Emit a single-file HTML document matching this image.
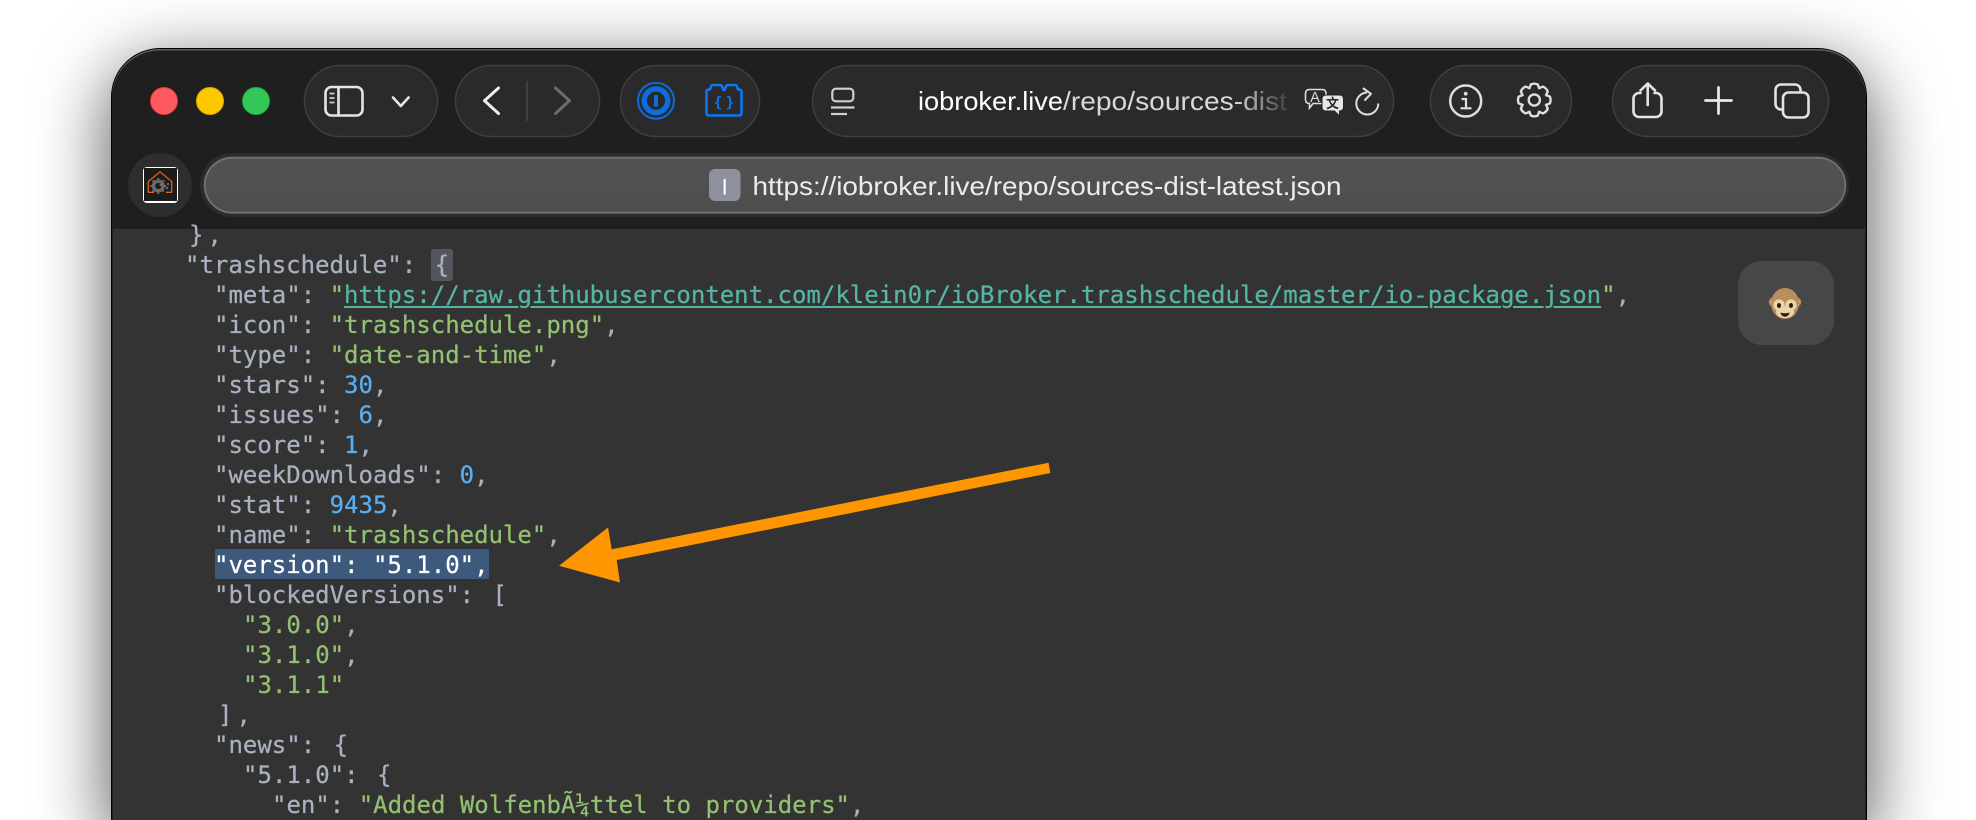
<!DOCTYPE html>
<html>
<head>
<meta charset="utf-8">
<style>
html,body{margin:0;padding:0;background:#fff;width:1976px;height:820px;overflow:hidden;}
#page{position:relative;width:1976px;height:820px;overflow:hidden;background:#fff;}
#win{position:absolute;left:112px;top:49px;width:1754px;height:771px;border-radius:48px 48px 0 0;background:#1f1f1f;box-shadow:0 0 0 1px #000,0 20px 70px 4px rgba(0,0,0,.65);}
#edge{position:absolute;left:112px;top:49px;width:1754px;height:60px;border-radius:48px 48px 0 0;box-shadow:inset 0 1.5px 0 #5e5e5e;}
#content{position:absolute;left:113px;top:229px;width:1752px;height:591px;background:#333;}
.l{position:absolute;height:30px;font:24px/30px "DejaVu Sans Mono","Liberation Mono",monospace;white-space:pre;color:#a9b1c1;-webkit-text-stroke:.25px currentColor;}
.s{color:#93c071;}
.n{color:#58aef0;}
.a{color:#55b5a5;text-decoration:underline;text-decoration-thickness:2px;text-underline-offset:3px;}
.b{padding:0 4px;}
.hl{background:#53565c;border-radius:3px;display:inline-block;height:32px;line-height:30px;vertical-align:top;margin-top:-1px;padding-top:1px;box-sizing:border-box;}
#sel{position:absolute;left:215px;top:549px;width:274px;height:30px;background:#3d5a7c;}
#code{position:absolute;left:-1px;top:1px;}
svg{position:absolute;left:0;top:0;}
</style>
</head>
<body>
<div id="page">
<div id="win"></div>
<div id="content"></div>
<div id="edge"></div>
<div id="sel"></div>
<div id="code">
<div class="l" style="left:186px;top:219px"><span class="b">}</span>,</div>
<div class="l" style="left:186px;top:249px">"trashschedule": <span class="b hl">{</span></div>
<div class="l" style="left:215px;top:279px">"meta": <span class="s">"</span><span class="a">https://raw.githubusercontent.com/klein0r/ioBroker.trashschedule/master/io-package.json</span><span class="s">"</span>,</div>
<div class="l" style="left:215px;top:309px">"icon": <span class="s">"trashschedule.png"</span>,</div>
<div class="l" style="left:215px;top:339px">"type": <span class="s">"date-and-time"</span>,</div>
<div class="l" style="left:215px;top:369px">"stars": <span class="n">30</span>,</div>
<div class="l" style="left:215px;top:399px">"issues": <span class="n">6</span>,</div>
<div class="l" style="left:215px;top:429px">"score": <span class="n">1</span>,</div>
<div class="l" style="left:215px;top:459px">"weekDownloads": <span class="n">0</span>,</div>
<div class="l" style="left:215px;top:489px">"stat": <span class="n">9435</span>,</div>
<div class="l" style="left:215px;top:519px">"name": <span class="s">"trashschedule"</span>,</div>
<div class="l" style="left:215px;top:549px;color:#fff">"version": "5.1.0",</div>
<div class="l" style="left:215px;top:579px">"blockedVersions": <span class="b">[</span></div>
<div class="l" style="left:244px;top:609px"><span class="s">"3.0.0"</span>,</div>
<div class="l" style="left:244px;top:639px"><span class="s">"3.1.0"</span>,</div>
<div class="l" style="left:244px;top:669px"><span class="s">"3.1.1"</span></div>
<div class="l" style="left:215px;top:699px"><span class="b">]</span>,</div>
<div class="l" style="left:215px;top:729px">"news": <span class="b">{</span></div>
<div class="l" style="left:244px;top:759px">"5.1.0": <span class="b">{</span></div>
<div class="l" style="left:273px;top:789px">"en": <span class="s">"Added Wolfenb&#xC3;&#xBC;ttel to providers"</span>,</div>
</div>

<svg width="1976" height="820" viewBox="0 0 1976 820" font-family="'Liberation Sans',sans-serif">
<defs>
<linearGradient id="fade" gradientUnits="userSpaceOnUse" x1="1235" y1="0" x2="1290" y2="0">
<stop offset="0" stop-color="#d8d8d8"/><stop offset="1" stop-color="#3a3a3a"/>
</linearGradient>
<linearGradient id="tab" x1="0" y1="0" x2="0" y2="1">
<stop offset="0" stop-color="#525252"/><stop offset="1" stop-color="#4e4e4e"/>
</linearGradient>
</defs>

<!-- traffic lights -->
<circle cx="164" cy="101" r="13.5" fill="#ff5a5f" stroke="#e0383e" stroke-width="1"/>
<circle cx="210" cy="101" r="13.5" fill="#fdc800" stroke="#dfa900" stroke-width="1"/>
<circle cx="256" cy="101" r="13.5" fill="#33c759" stroke="#1faa3f" stroke-width="1"/>

<!-- toolbar groups -->
<g fill="#2a2a2a" stroke="#3f3f3f" stroke-width="1.5">
<rect x="304.5" y="65.5" width="133" height="71" rx="35.5"/>
<rect x="455.5" y="65.5" width="144" height="71" rx="35.5"/>
<rect x="620.5" y="65.5" width="139" height="71" rx="35.5"/>
<rect x="812.5" y="65.5" width="581" height="71" rx="35.5"/>
<rect x="1430.5" y="65.5" width="141" height="71" rx="35.5"/>
<rect x="1612.5" y="65.5" width="216" height="71" rx="35.5"/>
</g>

<!-- sidebar icon -->
<g fill="none" stroke="#e6e6e6" stroke-width="2.6">
<rect x="325.5" y="87" width="37" height="28.5" rx="6"/>
<path d="M338.5 87V115.5"/>
<path d="M329.5 93.5h5M329.5 98h5M329.5 102.5h5" stroke-width="1.8" stroke="#cfcfcf"/>
</g>
<path d="M393 97.5l7.8 8.5 7.8-8.5" fill="none" stroke="#e6e6e6" stroke-width="2.6" stroke-linecap="round" stroke-linejoin="round"/>

<!-- back / forward -->
<path d="M498.5 88L484.5 100.7 498.5 113.5" fill="none" stroke="#efefef" stroke-width="3" stroke-linecap="round" stroke-linejoin="round"/>
<path d="M527 81V121" stroke="#454545" stroke-width="1.6"/>
<path d="M555.5 88L569.5 100.7 555.500 113.500" fill="none" stroke="#6c6c6c" stroke-width="3" stroke-linecap="round" stroke-linejoin="round"/>

<!-- 1Password -->
<circle cx="656" cy="100.7" r="18" fill="none" stroke="#0b6ee0" stroke-width="2"/>
<circle cx="656" cy="100.7" r="11.8" fill="none" stroke="#0b6ee0" stroke-width="5.4"/>
<rect x="654" y="94.7" width="4" height="12" rx="1.500" fill="#0b6ee0"/>

<!-- extension -->
<path d="M706.5 113V92q0-2.5 2.5-2.5h1l1-3q.5-1.500 2-1.500h7q1.500 0 2 1.500l1.500 3.500h1l1.500-3.500q.5-1.500 2-1.500h7q1.500 0 2 1.500l1 3h1q2.500 0 2.500 2.500V113q0 2.500-2.500 2.500H709q-2.500 0-2.500-2.500z" fill="none" stroke="#0a78f5" stroke-width="2.6" stroke-linejoin="round"/>
<text x="718" y="107" font-family="'DejaVu Sans Mono',monospace" font-weight="bold" font-size="14" fill="#0a78f5" text-anchor="middle">{</text>
<text x="730" y="107" font-family="'DejaVu Sans Mono',monospace" font-weight="bold" font-size="14" fill="#0a78f5" text-anchor="middle">}</text>

<!-- reader -->
<rect x="832.3" y="88.7" width="21" height="12.6" rx="3.6" fill="none" stroke="#cfcfcf" stroke-width="2.2"/>
<path d="M831 107.5h23.5" stroke="#cfcfcf" stroke-width="2.2"/>
<path d="M831 114h16" stroke="#cfcfcf" stroke-width="2.2"/>

<!-- address text -->
<text x="918" y="110" font-size="26" fill="#ffffff" textLength="145" lengthAdjust="spacingAndGlyphs">iobroker.live</text>
<text x="1063" y="110" font-size="26" fill="url(#fade)" textLength="224" lengthAdjust="spacingAndGlyphs">/repo/sources-dist</text>

<!-- translate -->
<path d="M1310 89.5h12q4 0 4 4v6q0 4-4 4h-9l-3.5 4.5v-4.5q-4 0-4-4v-6q0-4 4-4z" fill="none" stroke="#dcdcdc" stroke-width="1.6"/>
<text x="1315" y="102" font-size="14.5" fill="#dcdcdc" text-anchor="middle">A</text>
<path d="M1326 95h13.5q4 0 4 4v8q0 4-4 4v5l-5-5h-8.5q-4 0-4-4v-8q0-4 4-4z" fill="#e6e6e6" stroke="#262626" stroke-width="1"/>
<text x="1332.5" y="108" font-size="13" font-weight="bold" font-family="'Noto Sans CJK SC',sans-serif" fill="#2a2a2a" text-anchor="middle">文</text>

<!-- reload -->
<path d="M1367 92.5A11 11 0 1 0 1378.3 103.5" fill="none" stroke="#dcdcdc" stroke-width="2"/>
<path d="M1363.5 88.5L1371 93.8 1365 100" fill="none" stroke="#dcdcdc" stroke-width="2" stroke-linecap="round" stroke-linejoin="round"/>

<!-- info -->
<circle cx="1465.7" cy="101" r="15.5" fill="none" stroke="#dedede" stroke-width="2.5"/>
<circle cx="1465.7" cy="93.7" r="1.9" fill="#dedede"/>
<path d="M1461.5 99h4.5v9.2M1460.5 108.3h11" fill="none" stroke="#dedede" stroke-width="2.2"/>

<!-- gear -->
<g transform="translate(1534.3 100)" fill="none" stroke="#dedede" stroke-width="2.4" stroke-linejoin="round" stroke-linecap="round">
<circle r="5.6"/>
<path d="M-4.9-11.8L-3.4-15.6Q0-17 3.4-15.6L4.9-11.8"/>
<path transform="rotate(45)" d="M-4.9-11.8L-3.4-15.6Q0-17 3.4-15.6L4.9-11.8"/>
<path transform="rotate(90)" d="M-4.9-11.8L-3.4-15.6Q0-17 3.4-15.6L4.9-11.8"/>
<path transform="rotate(135)" d="M-4.9-11.8L-3.4-15.6Q0-17 3.4-15.6L4.9-11.8"/>
<path transform="rotate(180)" d="M-4.9-11.8L-3.4-15.6Q0-17 3.4-15.6L4.9-11.8"/>
<path transform="rotate(225)" d="M-4.9-11.8L-3.4-15.6Q0-17 3.4-15.6L4.9-11.8"/>
<path transform="rotate(270)" d="M-4.9-11.8L-3.4-15.6Q0-17 3.4-15.6L4.9-11.8"/>
<path transform="rotate(315)" d="M-4.9-11.8L-3.4-15.6Q0-17 3.4-15.6L4.9-11.8"/>
</g>

<!-- share -->
<g fill="none" stroke="#e4e4e4" stroke-width="2.6" stroke-linecap="round" stroke-linejoin="round">
<path d="M1640.5 93h-1.5a5.5 5.5 0 0 0-5.5 5.5V111.5a5.5 5.5 0 0 0 5.5 5.5h17a5.5 5.5 0 0 0 5.5-5.5V98.5a5.5 5.5 0 0 0-5.5-5.5h-1.5"/>
<path d="M1647.7 105V84"/>
<path d="M1640.5 90.5L1647.7 83.5 1655 90.5"/>
</g>

<!-- plus -->
<path d="M1718.5 87.5V113.5M1705.5 100.5H1731.5" stroke="#e8e8e8" stroke-width="2.8" stroke-linecap="round"/>

<!-- tabs -->
<g fill="none" stroke="#e2e2e2" stroke-width="2.6" stroke-linejoin="round">
<rect x="1783" y="92.5" width="25.5" height="25" rx="5.5"/>
<path d="M1783 109.5H1781a5.5 5.5 0 0 1-5.5-5.5V90a5.5 5.5 0 0 1 5.5-5.5H1795a5.5 5.5 0 0 1 5.5 5.5V92.5"/>
</g>

<!-- second row -->
<circle cx="160" cy="185" r="32" fill="#2e2e2e"/>
<rect x="143" y="167" width="35" height="36" rx="4" fill="#fff"/>
<rect x="144" y="168" width="33" height="33" fill="#1c1c1c"/>
<path d="M148.3 181.5L160 171.8 171.7 181.5V192.3H166M154 192.3H148.3V181.5" fill="none" stroke="#d9641c" stroke-width="1.3"/>
<circle cx="158.3" cy="186" r="4.8" fill="none" stroke="#6a6a6a" stroke-width="3.4"/>
<g stroke="#6a6a6a" stroke-width="2">
<path d="M158.3 178v2M158.3 192v2M150.3 186h2M164.3 186h2M152.6 180.3l1.4 1.4M162.6 190.3l1.4 1.4M152.6 191.7l1.4-1.4M162.6 181.7l1.4-1.4"/>
</g>
<circle cx="160.5" cy="185" r="1" fill="#d9641c"/>
<circle cx="168" cy="184" r="1" fill="#d9641c"/>
<circle cx="167" cy="188" r="1.2" fill="#6a6a6a"/>

<rect x="200" y="153" width="1649" height="64" rx="32" fill="#2c2c2c"/>
<rect x="204.7" y="157.7" width="1640.6" height="55" rx="27.5" fill="url(#tab)" stroke="#727272" stroke-width="1.8"/>

<rect x="709" y="169" width="31.5" height="32" rx="6" fill="#8f909e"/>
<text x="724.7" y="194.5" font-size="22" fill="#fff" text-anchor="middle">I</text>
<text x="752.5" y="195" font-size="26" fill="#ececec" textLength="589" lengthAdjust="spacingAndGlyphs">https://iobroker.live/repo/sources-dist-latest.json</text>

<!-- monkey button -->
<rect x="1738" y="261" width="96" height="84" rx="24" fill="#474747"/>
<circle cx="1773.5" cy="302" r="4.8" fill="#b68a5a"/>
<circle cx="1796.5" cy="302" r="4.8" fill="#b68a5a"/>
<circle cx="1773.2" cy="302" r="2.8" fill="#e8a8a8"/>
<circle cx="1796.8" cy="302" r="2.8" fill="#e8a8a8"/>
<ellipse cx="1785" cy="303.5" rx="14" ry="15.5" fill="#b98e5e"/>
<circle cx="1779" cy="305" r="5.6" fill="#ecd3a6"/>
<circle cx="1791" cy="305" r="5.6" fill="#ecd3a6"/>
<ellipse cx="1785" cy="312" rx="9" ry="6" fill="#ecd3a6"/>
<ellipse cx="1779" cy="305.5" rx="2" ry="2.5" fill="#2a1c14"/>
<ellipse cx="1791" cy="305.5" rx="2" ry="2.5" fill="#2a1c14"/>
<path d="M1780.5 312.5q4.5 1.5 9 0q-.8 4.2-4.5 4.2q-3.7 0-4.5-4.2z" fill="#3a1a10"/>

<!-- orange arrow -->
<polygon points="1048.6,462.7 1050.3,473 616.7,560 620,582.5 559,565.8 608,527.5 611.7,549.3" fill="#ff9500"/>
</svg>
</div>
</body>
</html>
